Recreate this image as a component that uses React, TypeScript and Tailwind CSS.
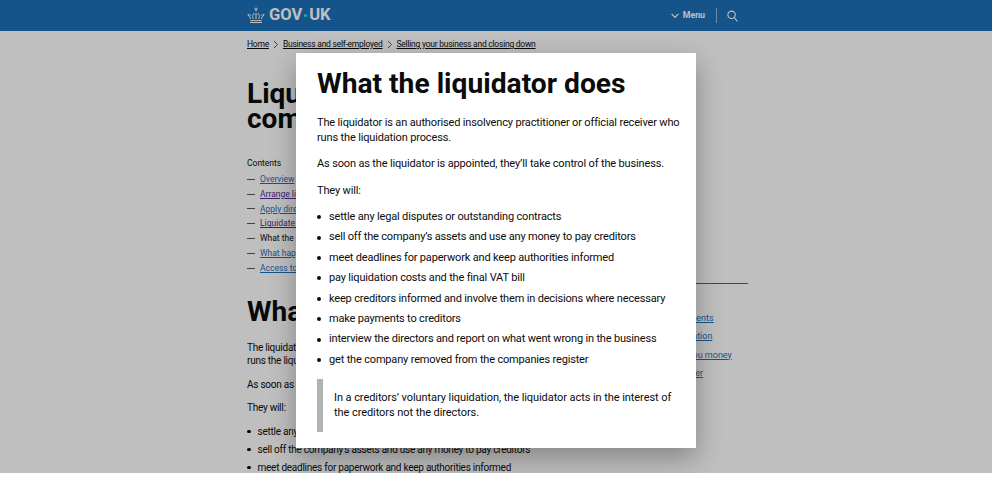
const font = { fontFamily: 'Roboto, sans-serif' };

function Crown() {
  return (
    <svg width="18" height="17" viewBox="0 0 18 17" fill="none" stroke="#fff" strokeWidth="1">
      <path d="M9 .5v4M7.4 2h3.2" />
      <path d="M3 15.5h12M3.4 13.6h11.2" />
      <path d="M3.6 12c-.6-1.6-1.4-3-2.8-4.3 1.3-.3 2.5.2 3.3 1.2M14.4 12c.6-1.6 1.4-3 2.8-4.3-1.3-.3-2.5.2-3.3 1.2" />
      <path d="M6.2 12c-.6-1.6-1-3.2 0-4.8.9-.9 2.1-.6 2.8.4.7-1 1.9-1.3 2.8-.4 1 1.6.6 3.2 0 4.8" />
      <path d="M9 7.6V12" />
    </svg>
  );
}

function Chevron() {
  return (
    <svg width="6" height="9" viewBox="0 0 6 9" fill="none" stroke="#505a5f" strokeWidth="1">
      <path d="M1 1l3.5 3.5L1 8" />
    </svg>
  );
}

const toc: [string, string][] = [
  ["Overview", "text-[#1d70b8] underline"],
  ["Arrange liquidation", "text-[#4c2c92] underline"],
  ["Apply directly to the court", "text-[#1d70b8] underline"],
  ["Liquidate a company", "text-[#4c2c92] underline"],
  ["What the liquidator does", "text-[#0b0c0c]"],
  ["What happens to directors", "text-[#1d70b8] underline"],
  ["Access to company records", "text-[#1d70b8] underline"],
];

const bullets = [
  "settle any legal disputes or outstanding contracts",
  "sell off the company’s assets and use any money to pay creditors",
  "meet deadlines for paperwork and keep authorities informed",
  "pay liquidation costs and the final VAT bill",
  "keep creditors informed and involve them in decisions where necessary",
  "make payments to creditors",
  "interview the directors and report on what went wrong in the business",
  "get the company removed from the companies register",
];

const related = [
  "Make staff redundant: payments",
  "A creditors’ voluntary liquidation",
  "If any customer still owes you money",
  "Contact an insolvency adviser",
];

export default function App() {
  return (
    <div className="relative h-[473px] overflow-hidden bg-white text-[#0b0c0c]" style={font}>
      <header className="h-[31px] bg-[#1d70b8]">
        <div className="ml-[247px] flex h-[31px] w-[491px] items-center justify-between">
          <div className="flex items-center gap-[4px] text-white">
            <Crown />
            <span className="flex items-center text-[16.5px] font-bold">GOV<span className="mx-[2px] h-[3px] w-[3px] rounded-full bg-[#00ffe0]" />UK</span>
          </div>
          <div className="flex items-center text-white">
            <svg width="8" height="6" viewBox="0 0 8 6" fill="none" stroke="#fff" strokeWidth="1.2">
              <path d="M.6 .8L4 4.4 7.4 .8" />
            </svg>
            <span className="ml-[4px] text-[8.8px] font-bold">Menu</span>
            <span className="ml-[11px] h-[15px] w-px bg-white/50" />
            <svg className="ml-[10px]" width="11" height="12" viewBox="0 0 11 12" fill="none" stroke="#fff" strokeWidth="1.1">
              <circle cx="4.6" cy="4.8" r="3.7" />
              <path d="M7.2 7.6L10.5 11.3" />
            </svg>
          </div>
        </div>
      </header>

      <main className="ml-[247px] w-[501px]">
        <nav className="mt-[7px] flex items-center text-[8.5px] leading-[13px] tracking-[-0.24px]">
          <a className="underline">Home</a>
          <span className="mx-[4px]"><Chevron /></span>
          <a className="underline">Business and self-employed</a>
          <span className="mx-[4px]"><Chevron /></span>
          <a className="underline">Selling your business and closing down</a>
        </nav>

        <h1 className="mt-[30px] text-[28px] font-bold leading-[25px]">Liquidate your limited<br />company</h1>

        <p className="mt-[26px] text-[8.5px] leading-[13px]">Contents</p>
        <ul className="mt-[2px] text-[8.5px]">
          {toc.map(([t, c]) => (
            <li key={t} className="flex h-[14.8px] items-center">
              <span className="mr-[5px] h-px w-[8px] bg-[#505a5f]" />
              <a className={c}>{t}</a>
            </li>
          ))}
        </ul>

        <div className="mt-[22px] flex">
          <div className="w-[337px] shrink-0">
            <h2 className="text-[28px] font-bold leading-[28px]">What the liquidator does</h2>
            <p className="mt-[15px] text-[10px] leading-[13.5px] tracking-[-0.25px]">The liquidator is an authorised insolvency practitioner or official receiver who<br />runs the liquidation process.</p>
            <p className="mt-[10px] text-[10px] leading-[13.5px] tracking-[-0.25px]">As soon as the liquidator is appointed, they’ll take control of the business.</p>
            <p className="mt-[10px] text-[10px] leading-[13.5px] tracking-[-0.25px]">They will:</p>
            <ul className="mt-[8px] text-[10px] leading-[18px] tracking-[-0.25px]">
              {bullets.slice(0, 3).map((b) => (
                <li key={b} className="flex"><span className="mr-[7px] mt-[7px] h-[3.5px] w-[3.5px] rounded-full bg-[#0b0c0c]" />{b}</li>
              ))}
            </ul>
          </div>
          <aside className="w-[164px] shrink-0 -translate-y-[15px] border-t border-[#1d70b8] pt-[25px] text-[9px] leading-[18.5px] text-[#1d70b8]">
            {related.map((r) => (
              <div key={r} className="whitespace-nowrap underline">{r}</div>
            ))}
          </aside>
        </div>
      </main>

      <div className="absolute inset-0 bg-black/25">
        <section className="mx-auto mt-[53px] h-[395px] w-[400px] bg-white pl-[21px] pr-[12px] pt-[14px] shadow-[0_10px_25px_rgba(0,0,0,0.3)]">
          <h2 className="text-[28.2px] font-bold leading-[34px]">What the liquidator does</h2>
          <p className="mt-[15px] text-[11px] leading-[14.5px] tracking-[-0.15px]">The liquidator is an authorised insolvency practitioner or official receiver who runs the liquidation process.</p>
          <p className="mt-[11px] text-[11px] leading-[15px] tracking-[-0.15px]">As soon as the liquidator is appointed, they’ll take control of the business.</p>
          <p className="mt-[12px] text-[11px] leading-[15px] tracking-[-0.15px]">They will:</p>
          <ul className="mt-[9px] text-[11px] tracking-[-0.17px]">
            {bullets.map((b) => (
              <li key={b} className="flex h-[20.4px] items-center">
                <span className="mr-[8px] h-[4px] w-[4px] rounded-full bg-[#0b0c0c]" />
                {b}
              </li>
            ))}
          </ul>
          <div className="mr-[8px] mt-[9px] flex h-[53px] items-center border-l-[6px] border-[#b1b4b6] pl-[11px] text-[11px] leading-[14.5px] tracking-[-0.07px]">
            <p>In a creditors’ voluntary liquidation, the liquidator acts in the interest of the creditors not the directors.</p>
          </div>
        </section>
      </div>
    </div>
  );
}
